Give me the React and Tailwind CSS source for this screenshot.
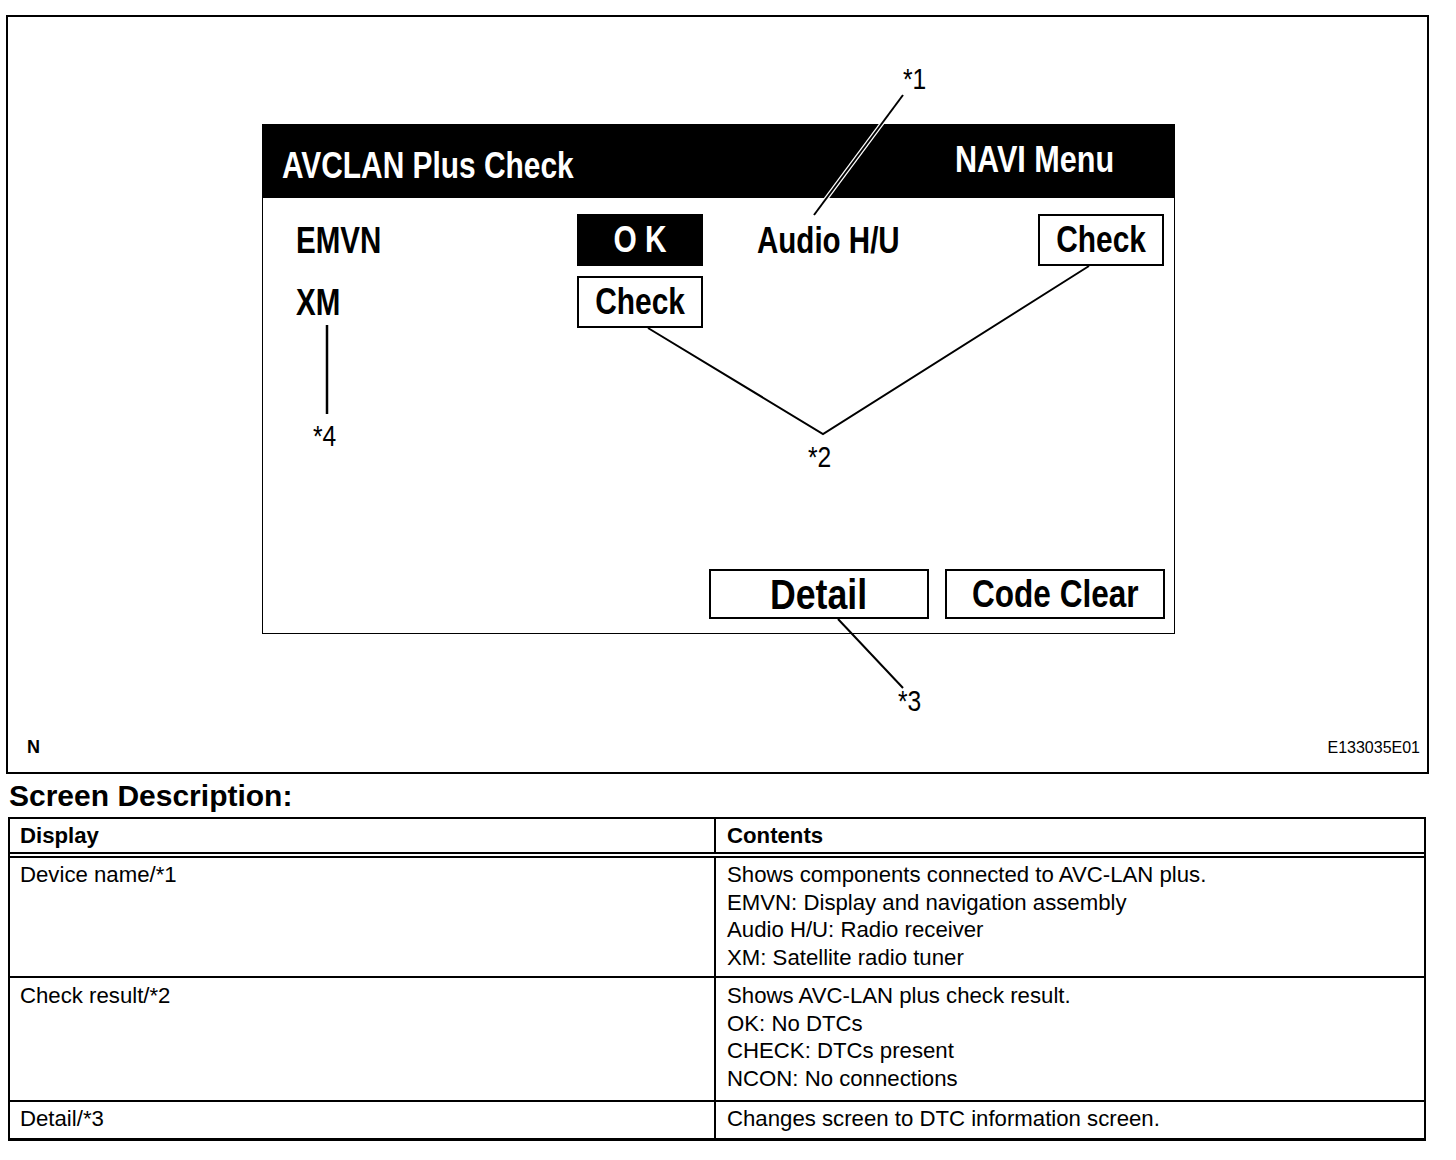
const sans = "font-['Liberation_Sans',Arial,sans-serif]";

// The diagram lettering is a condensed bold; no narrow face is installed,
// so the regular one is squeezed horizontally.
function Callouts() {
  const label = 'absolute inline-block origin-left scale-x-[0.82] text-[30px] leading-none';
  return (
    <div className="absolute left-[-8px] top-[-17px] w-[1456px] h-[790px] pointer-events-none">
      <svg width="1456" height="790" className="absolute left-0 top-0">
        {/* *1: black line with white halo so it shows on the header */}
        <line x1="903" y1="95" x2="814" y2="215" stroke="white" strokeWidth="4.5" />
        <line x1="903" y1="95" x2="814" y2="215" stroke="black" strokeWidth="2" />
        {/* *2 */}
        <polyline points="648,328 823,434 1089,266" fill="none" stroke="black" strokeWidth="2" />
        {/* *3 */}
        <line x1="838" y1="619" x2="903" y2="688" stroke="black" strokeWidth="2" />
        {/* *4 */}
        <line x1="327" y1="325" x2="327" y2="414" stroke="black" strokeWidth="2.5" />
      </svg>
      <span className={`${label} left-[903px] top-[64px]`}>*1</span>
      <span className={`${label} left-[808px] top-[442px]`}>*2</span>
      <span className={`${label} left-[898px] top-[686px]`}>*3</span>
      <span className={`${label} left-[313px] top-[421px]`}>*4</span>
    </div>
  );
}

function ResultBox({ children, dark }) {
  return (
    <div
      className={
        dark
          ? 'h-[52px] bg-black text-white flex items-center justify-center'
          : 'h-[52px] border-2 border-black flex items-center justify-center'
      }
    >
      <span className="inline-block scale-x-[0.83] text-[36px] leading-none font-bold">{children}</span>
    </div>
  );
}

function Label({ children }) {
  return (
    <div className="pt-[3px]">
      <span className="inline-block origin-left scale-x-[0.82] text-[36px] leading-none font-bold whitespace-nowrap">
        {children}
      </span>
    </div>
  );
}

function Screen() {
  return (
    <div className="ml-[254px] mt-[107px] w-[913px] h-[510px] border border-black flex flex-col">
      <div className="h-[73px] bg-black text-white flex font-bold text-[36px] leading-none">
        <div className="w-[692px] pl-[19px] pt-[23px]">
          <span className="inline-block origin-left scale-x-[0.83] whitespace-nowrap">AVCLAN Plus Check</span>
        </div>
        <div className="pt-[17px]">
          <span className="inline-block origin-left scale-x-[0.85] whitespace-nowrap">NAVI Menu</span>
        </div>
      </div>
      <div className="flex-1 flex flex-col">
        <div className="mt-[16px] pl-[33px] grid grid-cols-[281px_126px_54px_281px_126px] gap-y-[10px] items-center">
          <Label>EMVN</Label>
          <ResultBox dark>O K</ResultBox>
          <div />
          <Label>Audio H/U</Label>
          <ResultBox>Check</ResultBox>
          <Label>XM</Label>
          <ResultBox>Check</ResultBox>
        </div>
        <div className="mt-auto flex justify-end gap-[16px] pr-[9px] pb-[14px]">
          <div className="w-[220px] h-[50px] border-2 border-black flex items-center justify-center">
            <span className="inline-block scale-x-[0.83] text-[43px] leading-none font-bold">Detail</span>
          </div>
          <div className="w-[220px] h-[50px] border-2 border-black flex items-center justify-center">
            <span className="inline-block scale-x-[0.83] text-[38px] leading-none font-bold whitespace-nowrap">
              Code Clear
            </span>
          </div>
        </div>
      </div>
    </div>
  );
}

const rows = [
  {
    display: 'Device name/*1',
    lines: [
      'Shows components connected to AVC-LAN plus.',
      'EMVN: Display and navigation assembly',
      'Audio H/U: Radio receiver',
      'XM: Satellite radio tuner',
    ],
    cls: 'h-[120px] border-b-2 pt-[3px]',
  },
  {
    display: 'Check result/*2',
    lines: ['Shows AVC-LAN plus check result.', 'OK: No DTCs', 'CHECK: DTCs present', 'NCON: No connections'],
    cls: 'h-[124px] border-b-2 pt-[4px]',
  },
  {
    display: 'Detail/*3',
    lines: ['Changes screen to DTC information screen.'],
    cls: 'h-[36px] pt-[3px]',
  },
];

export default function App() {
  return (
    <div className={`min-h-[1160px] bg-white text-black ${sans}`}>
      <div className="relative ml-[6px] mt-[15px] w-[1423px] h-[759px] border-2 border-black">
        <Screen />
        <div className="mt-[104px] flex justify-between items-end pl-[19px] pr-[7px] leading-none">
          <span className="font-bold text-[18px]">N</span>
          <span className="text-[16px]">E133035E01</span>
        </div>
        <Callouts />
      </div>

      <h2 className="mt-[7px] ml-[9px] text-[30px] leading-none font-bold">Screen Description:</h2>

      <div className="mt-[6px] ml-[8px] w-[1418px] border-2 border-b-[3px] border-black text-[22.2px] leading-[27.7px]">
        <div className="flex h-[39px] border-b-[6px] border-double border-black font-bold">
          <div className="w-[706px] border-r-2 border-black pl-[10px] pt-[3px]">Display</div>
          <div className="flex-1 pl-[11px] pt-[3px]">Contents</div>
        </div>
        {rows.map(r => (
          <div key={r.display} className={`flex border-black ${r.cls}`}>
            <div className="w-[706px] border-r-2 border-black pl-[10px] -mt-[4px] pt-[4px]">{r.display}</div>
            <div className="flex-1 pl-[11px]">
              {r.lines.map(l => (
                <div key={l}>{l}</div>
              ))}
            </div>
          </div>
        ))}
      </div>
    </div>
  );
}
